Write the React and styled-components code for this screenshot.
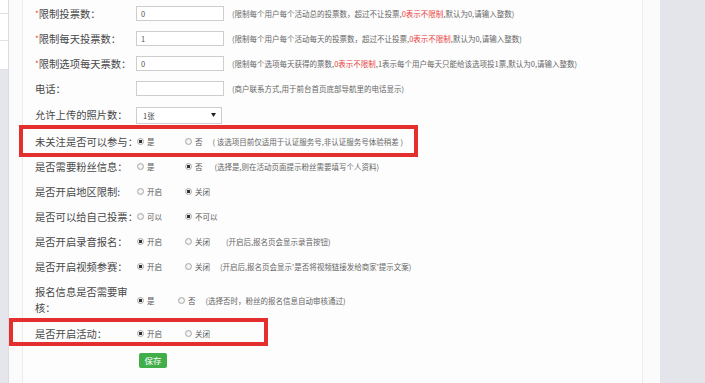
import React from "react";
import styled, { createGlobalStyle } from "styled-components";

const Global = createGlobalStyle`
  html, body { margin: 0; padding: 0; background: #fff; }
  body { font-family: "Noto Sans CJK SC", "Noto Sans", sans-serif; }
`;

const Page = styled.div`
  display: flex;
  width: 705px;
  height: 383px;
  overflow: hidden;
`;

const SideStrip = styled.div`
  width: 8px;
  flex: 0 0 8px;
  display: flex;
  flex-direction: column;
  border-right: 1px solid #dcdcdf;
`;

const SideCell = styled.div`
  height: ${(p) => p.$h}px;
  background: #fff;
  border-bottom: 1px solid #e2e2e4;
  box-sizing: border-box;
`;

const SideFill = styled.div`
  flex: 1;
  background: #e5e6eb;
`;

const Main = styled.div`
  flex: 0 0 651px;
  box-sizing: border-box;
  padding: 0 17px 0 13px;
  background: #fbfbfb;
`;

const Panel = styled.div`
  height: 100%;
  box-sizing: border-box;
  background: #fdfdfd;
  border-left: 1px solid #ececec;
  border-right: 1px solid #ececec;
  padding: 1px 0 0 12px;
`;

const RightFill = styled.div`
  flex: 1;
  background: #e4e5ea;
`;

const Row = styled.div`
  position: relative;
  display: flex;
  align-items: center;
  height: ${(p) => p.$h || 25}px;
`;

const Label = styled.div`
  width: 104px;
  flex: 0 0 104px;
  margin-right: -3px;
  font-size: 10.3px;
  line-height: 16px;
  color: #484848;
`;

const Star = styled.span`
  color: #e3423f;
  font-size: 8px;
  vertical-align: 1px;
`;

const TextInput = styled.input`
  box-sizing: border-box;
  width: 88px;
  height: 15px;
  margin: 0;
  border: 1px solid #cdcdcd;
  padding: 0 0 0 4px;
  font-family: inherit;
  font-size: 7.5px;
  color: #555;
  background: #fff;
  outline: none;
`;

const SelectBox = styled.div`
  box-sizing: border-box;
  width: 86px;
  height: 17px;
  border: 1px solid #cdcdcd;
  background: #fff;
  display: flex;
  align-items: center;
  justify-content: space-between;
  padding: 0 5px 0 6px;
  font-size: 7.5px;
  color: #444;
`;

const Hint = styled.span`
  margin-left: ${(p) => p.$gap ?? 8}px;
  font-size: 7.5px;
  color: #666;
  white-space: nowrap;
`;

const Red = styled.span`
  color: #e8403c;
`;

const Options = styled.div`
  display: flex;
  align-items: center;
  padding-left: 1px;
`;

const Option = styled.label`
  display: inline-flex;
  align-items: center;
  gap: 2px;
  width: ${(p) => (p.$w ? `${p.$w}px` : "auto")};
  font-size: 7.5px;
  color: #555;
  white-space: nowrap;
`;

const RadioDot = styled.span`
  box-sizing: border-box;
  width: 7px;
  height: 7px;
  border-radius: 50%;
  border: 1px solid #a8a8a8;
  background: ${(p) =>
    p.$on
      ? "radial-gradient(circle, #333 0 1.6px, #f4f4f4 2px)"
      : "radial-gradient(circle, #fff 0, #e2e2e2 100%)"};
  margin-right: 1px;
`;

const Highlight = styled.div`
  position: absolute;
  left: ${(p) => p.$l}px;
  top: ${(p) => p.$t}px;
  width: ${(p) => p.$w}px;
  height: ${(p) => p.$h}px;
  box-sizing: border-box;
  border: 4px solid #e42f2f;
  pointer-events: none;
`;

const ButtonRow = styled.div`
  display: flex;
  padding: 7px 0 0 104px;
`;

const SaveButton = styled.button`
  width: 28px;
  height: 15px;
  padding: 0;
  border: none;
  border-radius: 2px;
  background: #42ae4a;
  color: #fff;
  font-family: inherit;
  font-size: 8.5px;
  line-height: 15px;
`;

const Radio = ({ on, w, children }) => (
  <Option $w={w}>
    <RadioDot $on={on} />
    {children}
  </Option>
);

const Arrow = () => (
  <svg width="5" height="4" viewBox="0 0 5 4">
    <path d="M0 0 H5 L2.5 4 Z" fill="#222" />
  </svg>
);

export default function App() {
  return (
    <>
      <Global />
      <Page>
        <SideStrip>
          <SideCell $h={14} />
          <SideCell $h={27} />
          <SideCell $h={29} />
          <SideFill />
        </SideStrip>
        <Main>
          <Panel>
            <Row>
              <Label><Star>*</Star>限制投票数：</Label>
              <TextInput defaultValue="0" />
              <Hint>(限制每个用户每个活动总的投票数，超过不让投票,<Red>0表示不限制</Red>,默认为0,请输入整数)</Hint>
            </Row>
            <Row>
              <Label><Star>*</Star>限制每天投票数：</Label>
              <TextInput defaultValue="1" />
              <Hint>(限制每个用户每个活动每天的投票数，超过不让投票,<Red>0表示不限制</Red>,默认为0,请输入整数)</Hint>
            </Row>
            <Row>
              <Label><Star>*</Star>限制选项每天票数：</Label>
              <TextInput defaultValue="0" />
              <Hint>(限制每个选项每天获得的票数,<Red>0表示不限制</Red>,1表示每个用户每天只能给该选项投1票,默认为0,请输入整数)</Hint>
            </Row>
            <Row>
              <Label>电话：</Label>
              <TextInput defaultValue="" />
              <Hint>(商户联系方式,用于前台首页底部导航里的电话显示)</Hint>
            </Row>
            <Row $h={28}>
              <Label>允许上传的照片数：</Label>
              <SelectBox>
                <span>1张</span>
                <Arrow />
              </SelectBox>
            </Row>
            <Row>
              <Highlight $l={-16} $t={-4} $w={399} $h={32} />
              <Label>未关注是否可以参与：</Label>
              <Options>
                <Radio on w={48}>是</Radio>
                <Radio>否</Radio>
                <Hint $gap={10}>( 该选项目前仅适用于认证服务号,非认证服务号体验稍差 )</Hint>
              </Options>
            </Row>
            <Row>
              <Label>是否需要粉丝信息：</Label>
              <Options>
                <Radio w={48}>是</Radio>
                <Radio on>否</Radio>
                <Hint $gap={12}>(选择是,则在活动页面提示粉丝需要填写个人资料)</Hint>
              </Options>
            </Row>
            <Row>
              <Label>是否开启地区限制:</Label>
              <Options>
                <Radio w={48}>开启</Radio>
                <Radio on>关闭</Radio>
              </Options>
            </Row>
            <Row>
              <Label>是否可以给自己投票：</Label>
              <Options>
                <Radio w={48}>可以</Radio>
                <Radio on>不可以</Radio>
              </Options>
            </Row>
            <Row>
              <Label>是否开启录音报名：</Label>
              <Options>
                <Radio on w={48}>开启</Radio>
                <Radio>关闭</Radio>
                <Hint $gap={16}>(开启后,报名页会显示录音按钮)</Hint>
              </Options>
            </Row>
            <Row>
              <Label>是否开启视频参赛：</Label>
              <Options>
                <Radio on w={48}>开启</Radio>
                <Radio>关闭</Radio>
                <Hint $gap={10}>(开启后,报名页会显示'是否将视频链接发给商家'提示文案)</Hint>
              </Options>
            </Row>
            <Row $h={42}>
              <Label>报名信息是否需要审核：</Label>
              <Options>
                <Radio on w={41}>是</Radio>
                <Radio>否</Radio>
                <Hint $gap={10}>(选择否时，粉丝的报名信息自动审核通过)</Hint>
              </Options>
            </Row>
            <Row>
              <Highlight $l={-26} $t={-3} $w={259} $h={28} />
              <Label>是否开启活动：</Label>
              <Options>
                <Radio on w={48}>开启</Radio>
                <Radio>关闭</Radio>
              </Options>
            </Row>
            <ButtonRow>
              <SaveButton>保存</SaveButton>
            </ButtonRow>
          </Panel>
        </Main>
        <RightFill />
      </Page>
    </>
  );
}
